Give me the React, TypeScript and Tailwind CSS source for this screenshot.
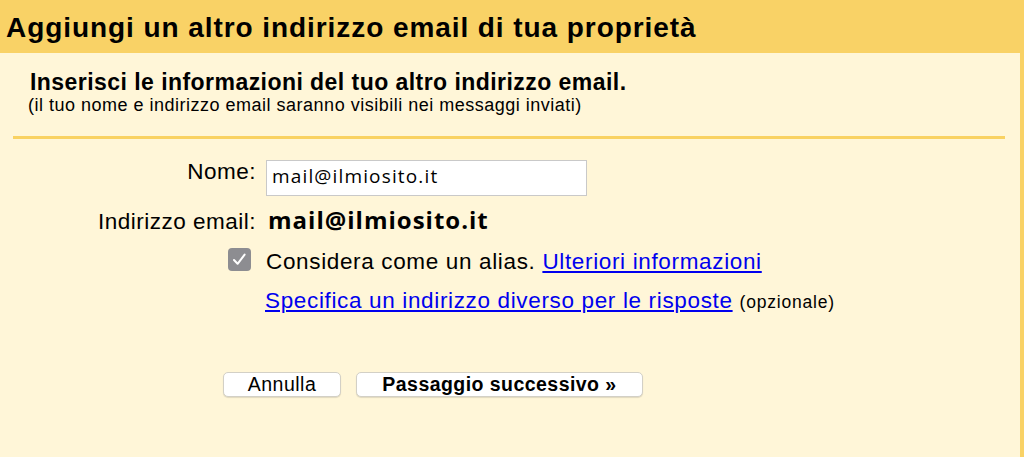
import React from "react";

export default function App() {
  return (
    <div className="w-[1024px] h-[457px] bg-[#f9d266] flex flex-col overflow-hidden" style={{ fontFamily: '"Liberation Sans", Arial, sans-serif' }}>
      <div className="h-[53px] flex items-center pl-[6px] pt-[2px] shrink-0">
        <h1 className="text-[28px] font-bold text-black leading-none tracking-[0.93px]">Aggiungi un altro indirizzo email di tua proprietà</h1>
      </div>
      <div className="flex-1 bg-[#fff6d8] mr-[4px] flex flex-col">
        <div className="pl-[30px] pt-[16px]">
          <div className="text-[23px] font-bold text-black leading-[26px] tracking-[0.45px]">Inserisci le informazioni del tuo altro indirizzo email.</div>
          <div className="text-[18px] text-black leading-[20px] tracking-[0.5px] -ml-[2px]">(il tuo nome e indirizzo email saranno visibili nei messaggi inviati)</div>
        </div>
        <div className="ml-[13px] mr-[15px] mt-[21px] h-[3px] bg-[#f9d262]" />

        <div className="flex items-start mt-[21px]">
          <div className="w-[256px] text-right text-[22.5px] leading-[26px] tracking-[0.5px] text-black -mt-[1px]">Nome:</div>
          <div className="ml-[10px] w-[321px] h-[36px] bg-white border border-[#c9c9c9] pl-[5px] pt-[3px] text-[19px] leading-[24px] tracking-[1.15px] text-black" style={{ fontFamily: '"Open Sans", sans-serif' }}>mail@ilmiosito.it</div>
        </div>

        <div className="flex items-baseline mt-[8px]">
          <div className="w-[256px] text-right text-[22.5px] leading-[26px] tracking-[0.5px] text-black">Indirizzo email:</div>
          <div className="ml-[12px] text-[24px] leading-[32px] font-bold tracking-[1px] text-black" style={{ fontFamily: '"Open Sans", sans-serif' }}>mail@ilmiosito.it</div>
        </div>

        <div className="flex items-start mt-[11px] pl-[228px]">
          <div className="w-[23px] h-[23px] mt-[1px] rounded-[4px] bg-[#8d8d91] mr-[15px] shrink-0">
            <svg width="23" height="23" viewBox="0 0 23 23" fill="none">
              <path d="M6 12 L9.6 15.8 L16.6 6.6" stroke="white" strokeWidth="2" strokeLinecap="round" strokeLinejoin="round" />
            </svg>
          </div>
          <div className="mt-[3px] text-[22.5px] leading-[24px] tracking-[0.65px] text-black">
            Considera come un alias. <a className="text-[#0000ee] underline">Ulteriori informazioni</a>
          </div>
        </div>

        <div className="mt-[15px] pl-[265px] text-[22.5px] leading-[24px] tracking-[0.65px] text-black">
          <a className="text-[#0000ee] underline">Specifica un indirizzo diverso per le risposte</a>{" "}
          <span className="text-[17.5px] tracking-[0.8px]">(opzionale)</span>
        </div>

        <div className="flex mt-[58px] pl-[223px] gap-[15px]">
          <button className="w-[118px] h-[25px] bg-white rounded-[5px] border border-[#d3d0c6] shadow-[0_1px_1px_rgba(0,0,0,0.12)] text-[19.5px] tracking-[0.5px] text-black leading-none">Annulla</button>
          <button className="w-[287px] h-[25px] bg-white rounded-[5px] border border-[#d3d0c6] shadow-[0_1px_1px_rgba(0,0,0,0.12)] text-[19.5px] tracking-[0.45px] font-bold text-black leading-none">Passaggio successivo »</button>
        </div>
      </div>
    </div>
  );
}
